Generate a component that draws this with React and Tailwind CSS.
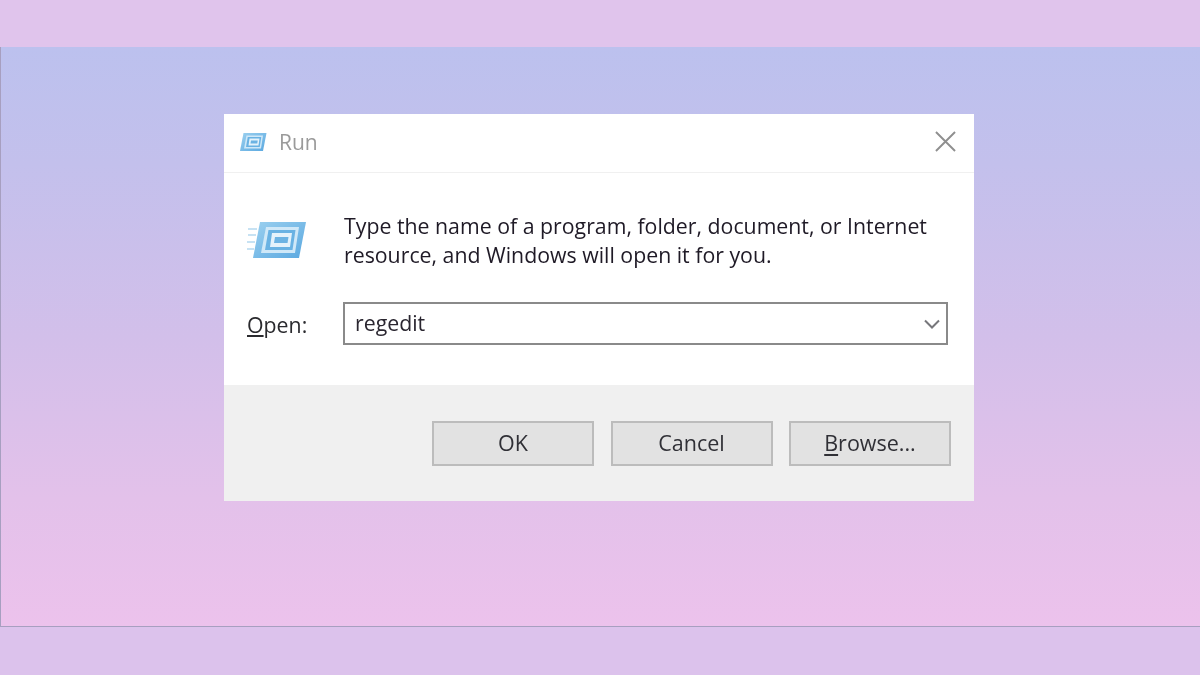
import React from "react";

const RunIcon = ({ className, id, lines = true }) => (
  <svg viewBox="0 0 60 40" className={className}>
    <defs>
      <linearGradient id={id} x1="0" y1="0" x2="1" y2="1">
        <stop offset="0" stopColor="#9bd0ef" />
        <stop offset="1" stopColor="#5aa8e0" />
      </linearGradient>
    </defs>
    {lines && (
      <g stroke="#b5d9f0" strokeWidth="1.6">
        <path d="M1 9h9M1 15h8M0 22h8M0 29h7" />
      </g>
    )}
    <path d="M13 2H59L52 38H6Z" fill={`url(#${id})`} />
    <path d="M19 7H52L48 33H14Z" fill="#cfe8f8" />
    <path d="M21.500 10H48.500L45.500 30H18Z" fill="#69b2e3" />
    <path d="M25 13H45L43 27H23Z" fill="#e4f2fb" />
    <path d="M28 17H41.500L40.500 23H27Z" fill="#6cb3e3" />
  </svg>
);

const DialogButton = ({ children }) => (
  <button className="flex h-[45px] w-[162px] items-center justify-center border-2 border-[#bcbcbc] bg-[#e2e2e2] text-[21.500px] text-[#303036]">
    {children}
  </button>
);

export default function App() {
  return (
    <div className="h-[675px] w-[1200px] overflow-hidden bg-[#dcc2ec] font-['Open_Sans',sans-serif]">
      <div className="h-[47px] bg-[#e0c4ec]" />
      <div className="h-[580px] border-b border-l border-[#a79fc0] bg-[linear-gradient(180deg,#bcc1ee_0%,#c3c0ec_20%,#d2bfea_50%,#e3c1ea_78%,#ecc2ec_100%)] pl-[223px] pt-[67px]">
        <div className="w-[750px] bg-white blur-[0.4px]">
          <div className="flex h-[59px] items-center border-b border-[#f0f0f0] pl-[13px] pr-[18px]">
            <RunIcon className="mb-[2px] h-[20px] w-[30px]" id="runBlueSmall" lines={false} />
            <span className="ml-[12px] text-[21px] text-[#9a9a9a]">Run</span>
            <svg viewBox="0 0 22 22" className="mb-[4px] ml-auto h-[21px] w-[21px]">
              <path d="M1 1L21 21M21 1L1 21" stroke="#8f8f8f" strokeWidth="2" />
            </svg>
          </div>

          <div className="flex pl-[23px] pt-[38px]">
            <RunIcon className="mt-[9px] h-[40px] w-[60px]" id="runBlueLarge" />
            <p className="ml-[37px] text-[21.300px] leading-[29px] text-[#1f1a26]">
              Type the name of a program, folder, document, or Internet
              <br />
              resource, and Windows will open it for you.
            </p>
          </div>

          <div className="flex items-center pl-[23px] pt-[33px]">
            <span className="mt-[2px] w-[96px] text-[21.300px] text-[#2a2a2e]">
              <span className="underline underline-offset-2">O</span>pen:
            </span>
            <div className="flex h-[43px] w-[605px] items-center border-2 border-[#8a8a8a] pl-[10px] pr-[6px]">
              <span className="mb-[2px] text-[21.300px] text-[#2a2630]">regedit</span>
              <svg viewBox="0 0 16 10" className="ml-auto h-[10px] w-[16px]">
                <path d="M1 1.500L8 8.500L15 1.500" fill="none" stroke="#77777b" strokeWidth="2" />
              </svg>
            </div>
          </div>

          <div className="mt-[40px] flex h-[116px] justify-end gap-[16.500px] bg-[#f0f0f0] pr-[23px] pt-[36px]">
            <DialogButton>OK</DialogButton>
            <DialogButton>Cancel</DialogButton>
            <DialogButton>
              <span className="underline underline-offset-3">B</span>rowse...
            </DialogButton>
          </div>
        </div>
      </div>
    </div>
  );
}
